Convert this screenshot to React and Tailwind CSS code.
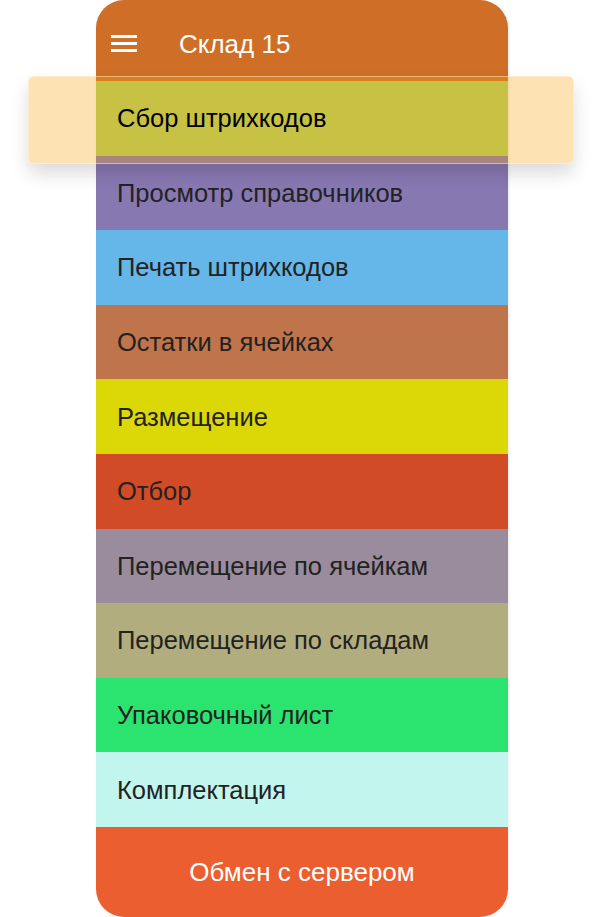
const items = [
  { label: "Сбор штрихкодов", bg: "bg-[#c8c244] relative z-10", text: "text-black" },
  { label: "Просмотр справочников", bg: "bg-[#8878b2]" },
  { label: "Печать штрихкодов", bg: "bg-[#64b7e8]" },
  { label: "Остатки в ячейках", bg: "bg-[#c0744b]" },
  { label: "Размещение", bg: "bg-[#dcd808]" },
  { label: "Отбор", bg: "bg-[#d24b27]" },
  { label: "Перемещение по ячейкам", bg: "bg-[#9a8c9c]" },
  { label: "Перемещение по складам", bg: "bg-[#b2ad7e]" },
  { label: "Упаковочный лист", bg: "bg-[#2ae46f]" },
  { label: "Комплектация", bg: "bg-[#c2f5ee]" },
];

const App = () => {
  return (
    <div className="relative w-[601px] h-[917px] bg-white overflow-hidden font-['Liberation_Sans',Arial,sans-serif]">
      {/* PHONE */}
      <div className="ml-[96px] w-[412px] h-full rounded-[28px] overflow-hidden flex flex-col shadow-[1px_0_3px_rgba(0,0,0,0.08)]">
        {/* HEADER */}
        <div className="h-[81px] shrink-0 bg-[#cf6e27] flex items-center pl-[15px] pt-[7px]">
          <svg width="26" height="18" viewBox="0 0 26 18">
            <rect x="0" y="0" width="26" height="3" fill="#fff" />
            <rect x="0" y="7" width="26" height="3" fill="#fff" />
            <rect x="0" y="14" width="26" height="3" fill="#fff" />
          </svg>
          <span className="ml-[42px] text-white text-[26px] leading-none">Склад 15</span>
        </div>

        {/* MENU */}
        {items.map((item) => (
          <div
            key={item.label}
            className={`h-[74.6px] shrink-0 flex items-center pl-[21px] text-[25.5px] ${item.bg} ${item.text || "text-[#222]"}`}
          >
            {item.label}
          </div>
        ))}

        {/* SYNC */}
        <div className="flex-1 bg-[#eb5e30] flex items-center justify-center text-white text-[26px] pt-[2px]">
          Обмен с сервером
        </div>
      </div>

      {/* HIGHLIGHT */}
      <div className="absolute left-[28px] top-[76px] w-[546px] h-[88px] rounded-md bg-[#f8a205]/30 border border-[#fff3dc]/50 shadow-[0_10px_18px_rgba(0,0,0,0.14)]" />
    </div>
  );
};

export default App;
